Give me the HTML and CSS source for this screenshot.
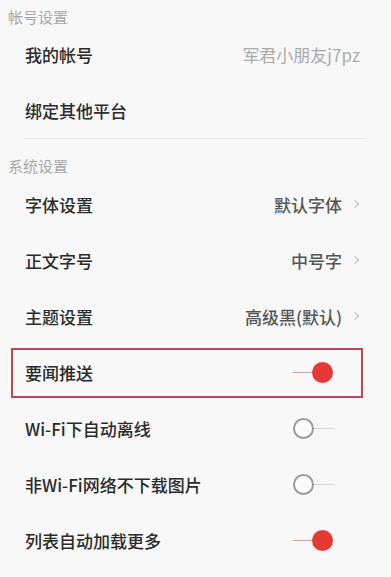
FILE: index.html
```html
<!DOCTYPE html>
<html lang="zh-CN">
<head>
  <meta charset="UTF-8">
  <meta name="viewport" content="width=device-width, initial-scale=1.0">
  <title>设置</title>
  <link rel="stylesheet" href="styles.css">
</head>
<body>
  <div class="section-title first">帐号设置</div>
  <div class="row">
    <span class="label">我的帐号</span>
    <span class="value light">军君小朋友j7pz</span>
  </div>
  <div class="row">
    <span class="label">绑定其他平台</span>
  </div>
  <div class="divider"></div>

  <div class="section-title">系统设置</div>
  <div class="row">
    <span class="label">字体设置</span>
    <span class="value">默认字体</span>
    <span class="chevron"></span>
  </div>
  <div class="row">
    <span class="label">正文字号</span>
    <span class="value">中号字</span>
    <span class="chevron"></span>
  </div>
  <div class="row">
    <span class="label">主题设置</span>
    <span class="value">高级黑(默认)</span>
    <span class="chevron"></span>
  </div>
  <div class="row highlight">
    <span class="label">要闻推送</span>
    <span class="toggle on"></span>
  </div>
  <div class="row">
    <span class="label">Wi-Fi下自动离线</span>
    <span class="toggle"></span>
  </div>
  <div class="row">
    <span class="label">非Wi-Fi网络不下载图片</span>
    <span class="toggle"></span>
  </div>
  <div class="row">
    <span class="label">列表自动加载更多</span>
    <span class="toggle on"></span>
  </div>
</body>
</html>
```

FILE: styles.css
```css
body {
  margin: 0;
  background: #f8f8f8;
  font-family: "Noto Sans CJK SC", "Noto Sans", sans-serif;
  color: #333;
  overflow: hidden;
}
.section-title {
  font-size: 15px;
  line-height: 14px;
  color: #a8a8a8;
  padding: 20px 0 3px 8px;
}
.section-title.first {
  padding-top: 10px;
  padding-bottom: 2px;
}
.row {
  position: relative;
  display: flex;
  align-items: center;
  height: 56px;
  margin: 0 25px;
}
.label {
  flex: 1;
  font-size: 17px;
  font-weight: 500;
  color: #2b2b2b;
}
.value {
  font-size: 17px;
  font-weight: 500;
  color: #555;
}
.value.light {
  font-weight: 400;
  color: #ababab;
  margin-right: 6px;
}
.chevron {
  width: 5px;
  height: 5px;
  border-top: 1.2px solid #bbb;
  border-right: 1.2px solid #bbb;
  transform: rotate(45deg);
  margin: 0 8px 0 10px;
}
.divider {
  height: 1px;
  background: #e8e8e8;
  margin: 0 25px;
}
.toggle {
  position: relative;
  width: 40px;
  height: 21px;
  margin-right: 33px;
}
.toggle::before {
  content: "";
  position: absolute;
  top: 10px;
  height: 1.5px;
  left: 20px;
  right: 0;
  background: #d4d4d4;
}
.toggle::after {
  content: "";
  position: absolute;
  left: 0;
  top: 0;
  width: 17px;
  height: 17px;
  border: 2px solid #9a9a9a;
  border-radius: 50%;
  background: #fbfbfb;
}
.toggle.on::before {
  left: 0;
  right: 20px;
  background: #c9a2a2;
}
.toggle.on::after {
  left: auto;
  right: 0;
  width: 21px;
  height: 21px;
  border: none;
  background: #e53935;
}
.highlight::after {
  content: "";
  position: absolute;
  left: -14px;
  right: 3px;
  top: 4px;
  bottom: 2px;
  border: 2px solid #b9494c;
}
```
